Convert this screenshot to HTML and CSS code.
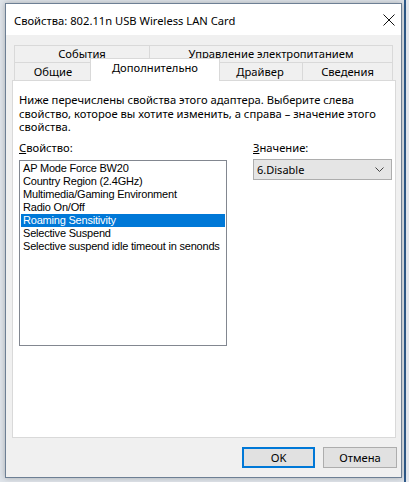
FILE: index.html
```html
<!DOCTYPE html>
<html lang="ru">

<head>
    <meta charset="UTF-8">
    <meta name="viewport" content="width=device-width, initial-scale=1.0">
    <title>Свойства: 802.11n USB Wireless LAN Card</title>
    <link rel="stylesheet" href="styles.css">
</head>

<body>
    <div class="window">
        <div class="titlebar">
            <span class="title">Свойства: 802.11n USB Wireless LAN Card</span>
            <span class="close">
                <svg width="12" height="12" viewBox="0 0 12 12">
                    <path d="M0.5 0.5 L11.5 11.5 M11.5 0.5 L0.5 11.5" stroke="#111" stroke-width="1" fill="none" />
                </svg>
            </span>
        </div>

        <div class="content">
            <div class="tabs">
                <div class="tab-row">
                    <div class="tab tab-events">События</div>
                    <div class="tab tab-power">Управление электропитанием</div>
                </div>
                <div class="tab-row">
                    <div class="tab tab-general">Общие</div>
                    <div class="tab tab-advanced active">Дополнительно</div>
                    <div class="tab tab-driver">Драйвер</div>
                    <div class="tab tab-details">Сведения</div>
                </div>
            </div>

            <div class="panel">
                <p class="desc">Ниже перечислены свойства этого адаптера. Выберите слева свойство, которое вы хотите изменить, а справа – значение этого свойства.</p>

                <div class="fields">
                    <div class="field-prop">
                        <div class="label"><u>С</u>войство:</div>
                        <ul class="listbox">
                            <li>AP Mode Force BW20</li>
                            <li>Country Region (2.4GHz)</li>
                            <li>Multimedia/Gaming Environment</li>
                            <li>Radio On/Off</li>
                            <li class="selected">Roaming Sensitivity</li>
                            <li>Selective Suspend</li>
                            <li>Selective suspend idle timeout in senonds</li>
                        </ul>
                    </div>
                    <div class="field-value">
                        <div class="label"><u>З</u>начение:</div>
                        <div class="combo">
                            <span>6.Disable</span>
                            <svg width="9" height="5" viewBox="0 0 9 5">
                                <path d="M0.5 0.5 L4.5 4.5 L8.5 0.5" stroke="#444" stroke-width="1" fill="none" />
                            </svg>
                        </div>
                    </div>
                </div>
            </div>

            <div class="buttons">
                <button class="btn btn-default">OK</button>
                <button class="btn">Отмена</button>
            </div>
        </div>
    </div>
</body>

</html>
```

FILE: styles.css
```css
* {
    box-sizing: border-box;
    margin: 0;
    padding: 0;
    font-family: 'Noto Sans', 'DejaVu Sans', sans-serif;
}

body {
    width: 409px;
    height: 482px;
    overflow: hidden;
    background: linear-gradient(to right, #dfe4ea 0, #dfe4ea 404px, #2f5a8a 404px, #2f5a8a 406px, #e4e8ee 406px);
    padding: 3px 7px 0 5px;
}

.window {
    width: 397px;
    height: 475px;
    border: 1px solid #6d7f94;
    background-color: #f0f0f0;
    display: flex;
    flex-direction: column;
    box-shadow: 0 0 6px rgba(0, 0, 0, 0.25);
}

.titlebar {
    height: 31px;
    background-color: #ffffff;
    display: flex;
    align-items: center;
    justify-content: space-between;
    padding: 1px 6px 0 8px;
}

.title {
    font-size: 11.2px;
    color: #000;
}

.close {
    display: flex;
}

.content {
    flex: 1;
    display: flex;
    flex-direction: column;
    padding: 10px 5px 8px 6px;
}

.tabs {
    margin: 0 2px;
    position: relative;
    z-index: 1;
}

.tab-row {
    display: flex;
    height: 18px;
}

.tab-row:first-child {
    height: 17px;
}

.tab {
    height: 100%;
    border: 1px solid #d9d9d9;
    border-bottom: none;
    background-color: #f0f0f0;
    font-size: 11.2px;
    color: #000;
    display: flex;
    align-items: center;
    justify-content: center;
    line-height: 1;
}

.tab + .tab {
    border-left: none;
}

.tab-events { width: 136px; }
.tab-power { width: 243px; }
.tab-general { width: 78px; }
.tab-driver { width: 85px; }
.tab-details { width: 90px; }

.tab-advanced {
    width: 126px;
}

.tab.active {
    width: 130px;
    height: 23px;
    margin: -4px -2px 0 -2px;
    align-self: flex-start;
    background-color: #ffffff;
    border: 1px solid #d9d9d9;
    border-bottom: none;
    padding-bottom: 4px;
    position: relative;
}

.panel {
    height: 358px;
    background-color: #ffffff;
    border: 1px solid #d9d9d9;
    padding: 12px 6px 0 6px;
}

.desc {
    font-size: 11.2px;
    line-height: 13.5px;
    color: #000;
    width: 362px;
}

.fields {
    display: flex;
    gap: 26px;
    margin-top: 7px;
}

.label {
    font-size: 11.2px;
    line-height: 14px;
    color: #000;
    margin-bottom: 5px;
}

.listbox {
    list-style: none;
    width: 208px;
    height: 186px;
    border: 1px solid #828790;
    padding: 1px;
}

.listbox li {
    font-family: 'Liberation Sans', Arial, sans-serif;
    font-size: 11px;
    letter-spacing: -0.2px;
    line-height: 13px;
    height: 13px;
    padding-left: 2px;
    color: #000;
    white-space: nowrap;
}

.listbox li.selected {
    background-color: #0078d7;
    color: #ffffff;
}

.combo {
    width: 139px;
    height: 21px;
    margin-top: -1px;
    background-color: #e5e5e5;
    border: 1px solid #adadad;
    display: flex;
    align-items: center;
    justify-content: space-between;
    padding: 0 7px 0 3px;
    font-family: 'Liberation Sans', Arial, sans-serif;
    font-size: 11px;
    color: #000;
}

.buttons {
    display: flex;
    justify-content: flex-end;
    gap: 8px;
    margin-top: 9px;
    margin-right: -1px;
}

.btn {
    width: 74px;
    height: 21px;
    background-color: #e1e1e1;
    border: 1px solid #adadad;
    font-size: 11.2px;
    color: #000;
}

.btn-default {
    width: 73px;
    border: 2px solid #0078d7;
}
```
